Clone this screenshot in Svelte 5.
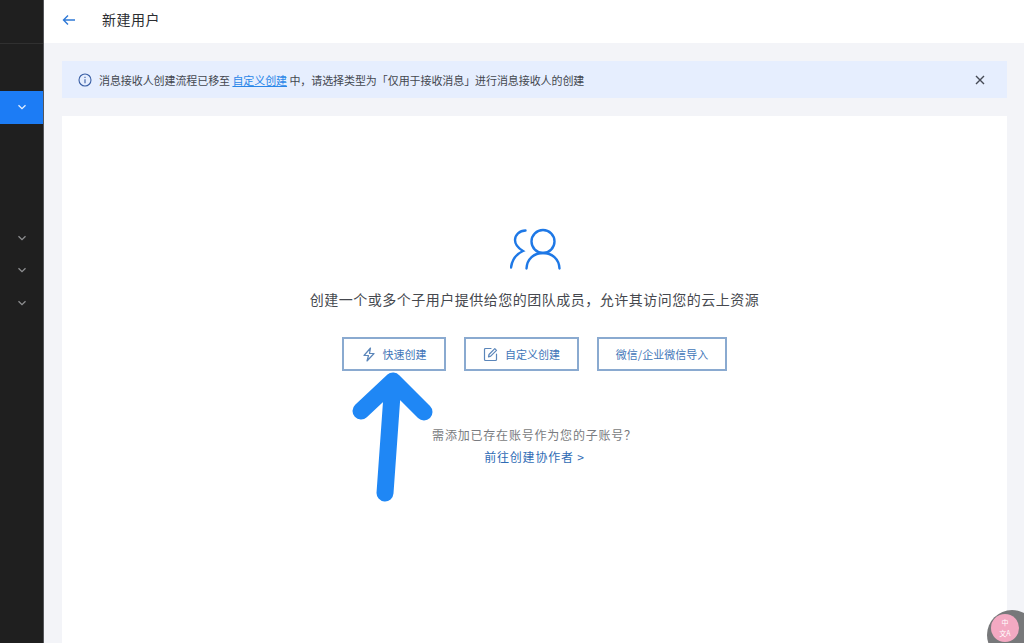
<script lang="ts">
  const buttons = [
    { label: "快速创建", icon: "bolt", width: 104 },
    { label: "自定义创建", icon: "edit", width: 115 },
    { label: "微信/企业微信导入", icon: "", width: 130 }
  ];
</script>

<div class="page">
  <aside class="sidebar">
    <div class="logo"></div>
    <div class="gap-a"></div>
    <div class="nav-item active">
      <svg width="10" height="10" viewBox="0 0 10 10"><path d="M1.5 3.2 5 6.7l3.5-3.5" /></svg>
    </div>
    <div class="gap-b"></div>
    {#each [0, 1, 2] as i (i)}
      <div class="nav-item">
        <svg width="10" height="10" viewBox="0 0 10 10"><path d="M1.5 3.2 5 6.7l3.5-3.5" /></svg>
      </div>
    {/each}
  </aside>

  <div class="main">
    <header class="topbar">
      <svg class="back" width="14" height="12" viewBox="0 0 14 12">
        <path d="M13 6H1.5M6 1.5 1.5 6 6 10.5" />
      </svg>
      <h1>新建用户</h1>
    </header>

    <div class="content">
      <div class="notice">
        <svg class="info" width="14" height="14" viewBox="0 0 14 14">
          <circle cx="7" cy="7" r="6" />
          <path d="M7 6.2v4M7 3.7v1.3" />
        </svg>
        <p>消息接收人创建流程已移至 <a href="#custom">自定义创建</a> 中，请选择类型为「仅用于接收消息」进行消息接收人的创建</p>
        <svg class="close" width="10" height="10" viewBox="0 0 10 10">
          <path d="M1 1l8 8M9 1l-8 8" />
        </svg>
      </div>

      <section class="card">
        <svg class="users" width="52" height="42" viewBox="0 0 52 42">
          <circle cx="33" cy="13.5" r="11.5" />
          <path d="M16.5 40.5C17 31 24 25 33 25s16 6 16.5 15.5" />
          <path d="M15.5 2.5C9.5 2.5 5 7 5 12c0 4.500 3 8 8 11-6.500 3-11 9-12 16.500" />
        </svg>
        <p class="lead">创建一个或多个子用户提供给您的团队成员，允许其访问您的云上资源</p>
        <div class="actions">
          {#each buttons as b (b.label)}
            <button type="button" style="width: {b.width}px">
              {#if b.icon === "bolt"}
                <svg width="14" height="15" viewBox="0 0 14 15">
                  <path d="M8.500 1 2 8.500h4.500L5 14l7-7.500H7.500L8.500 1Z" />
                </svg>
              {:else if b.icon === "edit"}
                <svg width="15" height="15" viewBox="0 0 15 15">
                  <path d="M8 1.500H2.500a1 1 0 0 0-1 1v10a1 1 0 0 0 1 1h10a1 1 0 0 0 1-1V7" />
                  <path d="M5.500 9.800 6 7.500 11.800 1.700l1.700 1.700L7.700 9.200Z" />
                </svg>
              {/if}
              <span>{b.label}</span>
            </button>
          {/each}
        </div>
        <div class="more">
          <p class="hint">需添加已存在账号作为您的子账号？</p>
          <a class="link" href="#collab">前往创建协作者 &gt;</a>
        </div>
      </section>
    </div>
  </div>

  <!-- hand drawn annotation on top of the screenshot -->
  <svg class="arrow" width="90" height="135" viewBox="0 0 90 135">
    <path d="M38 123 46 11M14 41 46 11 77 42" />
  </svg>

  <div class="translate">
    <span class="bubble">
      <span>中</span>
      <span>文A</span>
    </span>
  </div>
</div>

<style>
  :global(body) {
    margin: 0;
    background: #f3f4f8;
  }

  .page {
    position: relative;
    display: flex;
    width: 1024px;
    height: 643px;
    overflow: hidden;
    font-family: "Noto Sans CJK SC", "Inter", sans-serif;
  }

  .sidebar {
    flex: none;
    width: 43px;
    background: #1f1f1f;
    border-right: 1px solid #55565a;
    display: flex;
    flex-direction: column;
  }

  .logo {
    height: 43px;
    border-bottom: 1px solid #303030;
  }

  .gap-a {
    height: 47px;
  }

  .gap-b {
    height: 98px;
  }

  .nav-item {
    height: 32.5px;
    display: flex;
    align-items: center;
    justify-content: center;
  }

  .nav-item svg {
    fill: none;
    stroke: #8d8e90;
    stroke-width: 1.300;
  }

  .nav-item.active {
    background: #1c7cf5;
  }

  .nav-item.active svg {
    stroke: #e4efff;
  }

  .main {
    flex: 1;
    display: flex;
    flex-direction: column;
    min-width: 0;
  }

  .topbar {
    flex: none;
    height: 43px;
    background: #fff;
    display: flex;
    align-items: center;
    padding-left: 18px;
  }

  .back {
    fill: none;
    stroke: #2f79d6;
    stroke-width: 1.400;
    margin-right: 26px;
    margin-bottom: 3px;
  }

  h1 {
    margin: 0 0 5px;
    font-size: 14px;
    font-weight: 400;
    color: #2b2d31;
    letter-spacing: 0.500px;
  }

  .content {
    flex: 1;
    padding: 18px 17px 0 18px;
    display: flex;
    flex-direction: column;
    gap: 18px;
    min-height: 0;
  }

  .notice {
    flex: none;
    height: 37px;
    background: #e6eefe;
    display: flex;
    align-items: center;
    padding: 0 22px 0 16px;
    color: #43474f;
  }

  .notice p {
    flex: 1;
    margin: 0 0 0 7px;
    font-size: 11px;
    line-height: 16px;
    letter-spacing: -0.080px;
    white-space: nowrap;
  }

  .notice a {
    color: #2a86e8;
    text-decoration: underline;
  }

  .info {
    fill: none;
    stroke: #3a5fa5;
    stroke-width: 1.100;
  }

  .close {
    fill: none;
    stroke: #454a55;
    stroke-width: 1.400;
  }

  .card {
    flex: 1;
    background: #fff;
    display: flex;
    flex-direction: column;
    align-items: center;
    padding-top: 112px;
  }

  .users {
    fill: none;
    stroke: #1e78e6;
    stroke-width: 2.400;
    stroke-linecap: round;
    margin-left: 3px;
  }

  .lead {
    margin: 18px 0 0;
    font-size: 14px;
    line-height: 22px;
    letter-spacing: 0.500px;
    color: #45484e;
  }

  .actions {
    display: flex;
    gap: 18px;
    margin-top: 27px;
  }

  button {
    box-sizing: border-box;
    height: 34px;
    display: flex;
    align-items: center;
    justify-content: center;
    gap: 7px;
    background: #fff;
    border: 2px solid #8aaad0;
    padding: 0;
    font: inherit;
    font-size: 11px;
    color: #3f76b8;
  }

  button svg {
    fill: none;
    stroke: #5b86ba;
    stroke-width: 1.200;
    stroke-linejoin: round;
    stroke-linecap: round;
  }

  .more {
    margin-top: 54px;
    display: flex;
    flex-direction: column;
    align-items: center;
    gap: 2px;
  }

  .hint {
    margin: 0;
    font-size: 12px;
    line-height: 20px;
    letter-spacing: 0.800px;
    color: #797b80;
  }

  .link {
    font-size: 12px;
    line-height: 20px;
    letter-spacing: 0.800px;
    color: #2f6cb5;
    text-decoration: none;
  }

  .arrow {
    position: absolute;
    left: 347px;
    top: 370px;
    fill: none;
    stroke: #1f87f5;
    stroke-width: 17;
    stroke-linecap: round;
    stroke-linejoin: round;
  }

  .translate {
    position: absolute;
    left: 987px;
    top: 610px;
    width: 50px;
    height: 50px;
    border-radius: 50%;
    background: #77787a;
    display: flex;
    padding: 4px;
    box-sizing: border-box;
  }

  .bubble {
    width: 28px;
    height: 28px;
    border-radius: 50%;
    background: #f3a9c2;
    color: #fff;
    font-size: 7px;
    line-height: 11px;
    display: flex;
    flex-direction: column;
    align-items: center;
    justify-content: center;
  }
</style>
